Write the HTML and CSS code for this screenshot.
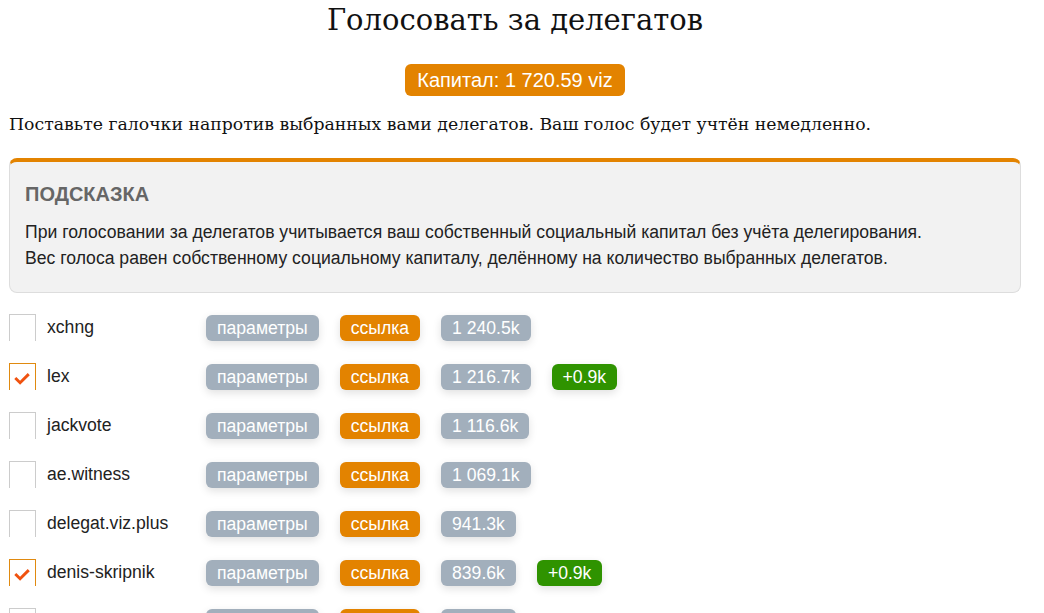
FILE: index.html
```html
<!DOCTYPE html>
<html lang="ru">
<head>
<meta charset="utf-8">
<title>Голосовать за делегатов</title>
<link rel="stylesheet" href="styles.css">
</head>
<body>
<div class="page">
  <h1 class="title">Голосовать за делегатов</h1>
  <div class="capital-wrap"><span class="capital">Капитал: 1 720.59 viz</span></div>
  <p class="lead">Поставьте галочки напротив выбранных вами делегатов. Ваш голос будет учтён немедленно.</p>
  <div class="hint">
    <div class="hint-title">ПОДСКАЗКА</div>
    <p class="hint-text">При голосовании за делегатов учитывается ваш собственный социальный капитал без учёта делегирования.<br>Вес голоса равен собственному социальному капиталу, делённому на количество выбранных делегатов.</p>
  </div>
  <div class="list">
    <div class="row"><span class="check"></span><span class="name">xchng</span><span class="badge gray">параметры</span><span class="badge orange">ссылка</span><span class="badge gray">1 240.5k</span></div>
    <div class="row"><span class="check on"><svg viewBox="0 0 26 26" width="26" height="26"><path d="M5.5 14 L10.5 19 L19.5 10" fill="none" stroke="#f0520f" stroke-width="3"/></svg></span><span class="name">lex</span><span class="badge gray">параметры</span><span class="badge orange">ссылка</span><span class="badge gray">1 216.7k</span><span class="badge green">+0.9k</span></div>
    <div class="row"><span class="check"></span><span class="name">jackvote</span><span class="badge gray">параметры</span><span class="badge orange">ссылка</span><span class="badge gray">1 116.6k</span></div>
    <div class="row"><span class="check"></span><span class="name">ae.witness</span><span class="badge gray">параметры</span><span class="badge orange">ссылка</span><span class="badge gray">1 069.1k</span></div>
    <div class="row"><span class="check"></span><span class="name">delegat.viz.plus</span><span class="badge gray">параметры</span><span class="badge orange">ссылка</span><span class="badge gray">941.3k</span></div>
    <div class="row"><span class="check on"><svg viewBox="0 0 26 26" width="26" height="26"><path d="M5.5 14 L10.5 19 L19.5 10" fill="none" stroke="#f0520f" stroke-width="3"/></svg></span><span class="name">denis-skripnik</span><span class="badge gray">параметры</span><span class="badge orange">ссылка</span><span class="badge gray">839.6k</span><span class="badge green">+0.9k</span></div>
    <div class="row"><span class="check"></span><span class="name">viz.world</span><span class="badge gray">параметры</span><span class="badge orange">ссылка</span><span class="badge gray">812.4k</span></div>
  </div>
</div>
</body>
</html>
```

FILE: styles.css
```css
html, body { margin: 0; padding: 0; background: #fff; }
body { font-family: "DejaVu Serif", serif; color: #111; }
.page { padding: 0 23px 0 9px; }
.title { margin: 0; padding-top: 2px; text-align: center; font-weight: normal; font-size: 29px; line-height: 36px; color: #111; }
.capital-wrap { display: flex; justify-content: center; margin-top: 26px; }
.capital { background: #e38300; color: #fff; font-family: "Liberation Sans", Arial, sans-serif; font-size: 20px; line-height: 32px; padding: 0 12px; border-radius: 6px; }
.lead { margin: 15px 0 0; font-size: 17.3px; line-height: 26px; }
.hint { margin-top: 21px; background: #f2f2f2; border: 1px solid #ddd; border-top: 4px solid #e38300; border-radius: 8px; padding: 20px 15px 21px; font-family: "Liberation Sans", Arial, sans-serif; }
.hint-title { font-weight: bold; font-size: 20px; line-height: 24px; color: #666; }
.hint-text { margin: 13px 0 0; font-size: 17.6px; line-height: 26px; color: #222; }
.list { margin-top: 21px; display: flex; flex-direction: column; gap: 22px; font-family: "Liberation Sans", Arial, sans-serif; }
.row { display: flex; align-items: center; height: 27px; }
.check { width: 27px; height: 27px; border: 1px solid #ccc; border-bottom: none; box-sizing: border-box; display: flex; align-items: center; justify-content: center; }
.check.on { border-color: #e08a10; }
.name { width: 159px; padding-left: 11px; font-size: 17.6px; color: #222; }
.badge { color: #fff; font-size: 17.6px; line-height: 26px; padding: 0 11px; border-radius: 6px; margin-right: 21px; box-shadow: 0 3px 8px rgba(0,0,0,0.12); }
.gray { background: #a2afbc; }
.orange { background: #e38300; }
.green { background: #2f9300; }
```
